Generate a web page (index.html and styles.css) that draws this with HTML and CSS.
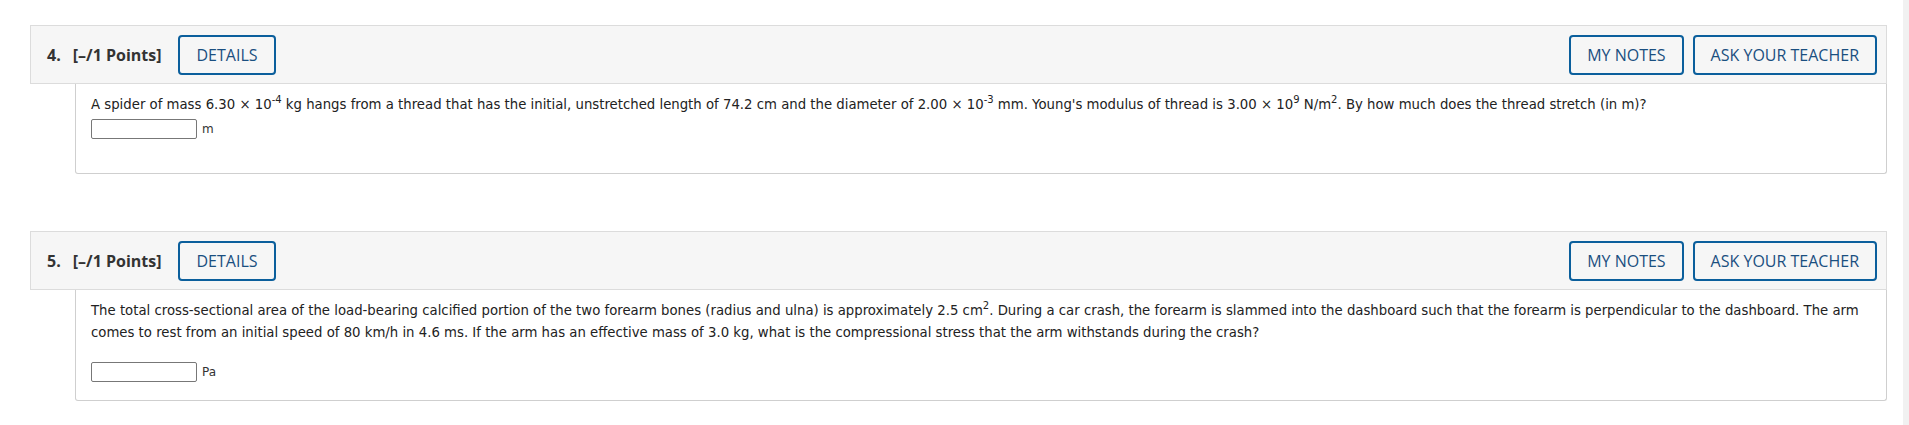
FILE: index.html
```html
<!DOCTYPE html>
<html>
<head>
<meta charset="utf-8">
<link rel="stylesheet" href="styles.css">
</head>
<body>
<div class="page">
  <main class="main">
    <section class="question q4">
      <header class="qhead">
        <div class="qtitle"><span class="qnum">4.</span><span class="qpts">[–/1 Points]</span></div>
        <button class="btn btn-details">DETAILS</button>
        <div class="spacer"></div>
        <button class="btn">MY NOTES</button>
        <button class="btn">ASK YOUR TEACHER</button>
      </header>
      <div class="qbody">
        <div class="qtext">A spider of mass <span class="num">6.30 × 10<sup>-4</sup></span> kg hangs from a thread that has the initial, unstretched length of 74.2 cm and the diameter of <span class="num">2.00 × 10<sup>-3</sup></span> mm. Young's modulus of thread is <span class="num">3.00 × 10<sup>9</sup></span> N/m<sup>2</sup>. By how much does the thread stretch (in m)?</div>
        <div class="answer a4"><span class="inbox"></span><span class="unit">m</span></div>
      </div>
    </section>
    <section class="question q5">
      <header class="qhead">
        <div class="qtitle"><span class="qnum">5.</span><span class="qpts">[–/1 Points]</span></div>
        <button class="btn btn-details">DETAILS</button>
        <div class="spacer"></div>
        <button class="btn">MY NOTES</button>
        <button class="btn">ASK YOUR TEACHER</button>
      </header>
      <div class="qbody">
        <div class="qtext">The total cross-sectional area of the load-bearing calcified portion of the two forearm bones (radius and ulna) is approximately <span class="num">2.5</span> cm<sup>2</sup>. During a car crash, the forearm is slammed into the dashboard such that the forearm is perpendicular to the dashboard. The arm comes to rest from an initial speed of 80 km/h in <span class="num">4.6</span> ms. If the arm has an effective mass of 3.0 kg, what is the compressional stress that the arm withstands during the crash?</div>
        <div class="answer a5"><span class="inbox"></span><span class="unit">Pa</span></div>
      </div>
    </section>
  </main>
  <div class="strip"></div>
</div>
</body>
</html>
```

FILE: styles.css
```css
html, body {
  margin: 0;
  padding: 0;
  background: #fff;
}
.page {
  display: flex;
  height: 425px;
  overflow: hidden;
}
.main {
  flex: 1;
  padding: 25px 16px 0 30px;
}
.strip {
  width: 6px;
  background: #f1f1f1;
}
.question {
  margin-bottom: 57px;
}
.question:last-child {
  margin-bottom: 0;
}
.qhead {
  display: flex;
  align-items: center;
  gap: 9px;
  height: 57px;
  padding: 0 9px 0 16px;
  background: #f6f6f6;
  border: 1px solid #dcdcdc;
  font-family: "Open Sans", sans-serif;
}
.qtitle {
  font-weight: 700;
  font-size: 16px;
  color: #333;
  margin-right: 8px;
  display: flex;
  gap: 12px;
}
.btn {
  height: 40px;
  box-sizing: border-box;
  padding: 0 16px;
  background: transparent;
  border: 2px solid #0b5f9c;
  border-radius: 4px;
  font-family: "Open Sans", sans-serif;
  font-size: 16px;
  color: #1a4f80;
}
.spacer {
  flex: 1;
}
.qbody {
  margin-left: 45px;
  border: 1px solid #cfcfcf;
  border-top: none;
  border-radius: 0 0 3px 3px;
  padding: 10px 15px 0 15px;
  box-sizing: border-box;
  font-family: "DejaVu Sans", sans-serif;
  font-size: 13.27px;
  color: #222;
}
.q4 .qbody {
  height: 90px;
}
.q5 .qbody {
  height: 111px;
}
.qtext {
  line-height: 22px;
}
sup {
  font-size: 10px;
  line-height: 0;
  vertical-align: 6px;
}
.answer {
  display: flex;
  align-items: center;
  gap: 5px;
}
.a4 {
  margin-top: 3px;
}
.a5 {
  margin-top: 18px;
}
.inbox {
  width: 104px;
  height: 18px;
  border: 1px solid #777;
  border-radius: 2px;
  background: #fff;
}
.unit {
  font-size: 12px;
  color: #333;
}
```
